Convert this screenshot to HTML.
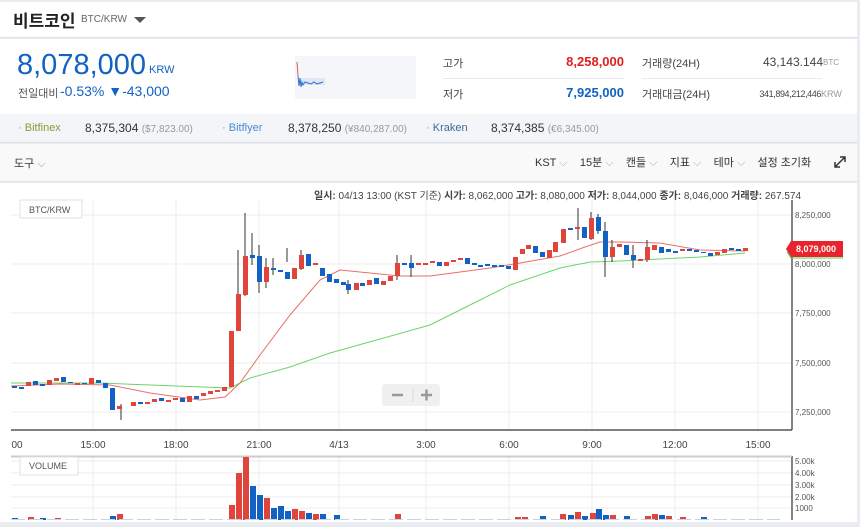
<!DOCTYPE html>
<html><head><meta charset="utf-8"><style>
*{margin:0;padding:0;box-sizing:border-box}
body{width:860px;height:527px;overflow:hidden;background:#e9ecf1;font-family:"Liberation Sans","Noto Sans CJK KR",sans-serif;position:relative;color:#333}
.a{position:absolute;white-space:nowrap}
.k{font-family:"Liberation Sans","Noto Sans CJK KR",sans-serif}
</style></head><body>
<div class="a" style="left:0;top:2px;width:857px;height:36px;background:#fff;border-bottom:1px solid #dde1ea"></div>
<div class="a k" style="left:13px;top:7px;font-size:17px;font-weight:bold;color:#222">비트코인</div>
<div class="a" style="left:81px;top:14px;font-size:10px;color:#666">BTC/KRW</div>
<div class="a" style="left:134px;top:17px;width:0;height:0;border-left:6px solid transparent;border-right:6px solid transparent;border-top:6px solid #555"></div>
<div class="a" style="left:0;top:39px;width:857px;height:75px;background:#fff"></div>
<div class="a" style="left:17px;top:49px;font-size:29px;color:#1261c4">8,078,000</div>
<div class="a" style="left:149px;top:64px;font-size:11px;color:#1261c4">KRW</div>
<div class="a k" style="left:18px;top:85px;font-size:11px;color:#555">전일대비</div>
<div class="a" style="left:60px;top:83px;font-size:14px;color:#1261c4">-0.53% ▼-43,000</div>
<div class="a" style="left:295px;top:56px;width:121px;height:43px;background:#f4f6fa"></div>
<svg class="a" style="left:295px;top:56px" width="121" height="43"><rect x="3" y="22" width="27" height="7" fill="#dfe7f3"/><path d="M2 6 L3 20" stroke="#e55" fill="none"/><path d="M3 20 L4 30 L5 22 L6 31 L7 26 L8 29 L10 26 L13 27 L16 28 L19 26 L22 28 L25 27 L28 26" stroke="#2b6fd1" fill="none"/></svg>
<div class="a k" style="left:443px;top:55px;font-size:11px;color:#444">고가</div>
<div class="a" style="left:540px;top:54px;width:84px;text-align:right;font-size:13px;font-weight:bold;color:#e02020">8,258,000</div>
<div class="a" style="left:443px;top:78px;width:181px;height:1px;background:#e8eaef"></div>
<div class="a k" style="left:443px;top:86px;font-size:11px;color:#444">저가</div>
<div class="a" style="left:540px;top:85px;width:84px;text-align:right;font-size:13px;font-weight:bold;color:#1261c4">7,925,000</div>
<div class="a k" style="left:642px;top:55px;font-size:11px;color:#444">거래량(24H)</div>
<div class="a" style="left:700px;top:55px;width:123px;text-align:right;font-size:12px;color:#444">43,143.144</div>
<div class="a" style="left:823px;top:58px;font-size:8px;color:#999">BTC</div>
<div class="a" style="left:642px;top:78px;width:180px;height:1px;background:#e8eaef"></div>
<div class="a k" style="left:642px;top:86px;font-size:11px;color:#444">거래대금(24H)</div>
<div class="a" style="left:700px;top:89px;width:121px;text-align:right;font-size:9px;color:#444;letter-spacing:-0.4px">341,894,212,446</div>
<div class="a" style="left:821px;top:89px;font-size:9px;color:#999">KRW</div>
<div class="a" style="left:0;top:114px;width:857px;height:29px;background:#f3f5f8;border-bottom:1px solid #dde1e6"></div>
<div class="a" style="left:18px;top:122px;font-size:11px;color:#8a9a3a"><span style="color:#999">· </span>Bitfinex</div>
<div class="a" style="left:85px;top:121px;font-size:12px;color:#333">8,375,304 <span style="font-size:10px;color:#999">($7,823.00)</span></div>
<div class="a" style="left:222px;top:122px;font-size:11px;color:#4a8ad4"><span style="color:#999">· </span>Bitflyer</div>
<div class="a" style="left:288px;top:121px;font-size:12px;color:#333">8,378,250 <span style="font-size:10px;color:#999">(¥840,287.00)</span></div>
<div class="a" style="left:426px;top:122px;font-size:11px;color:#3a6d9a"><span style="color:#999">· </span>Kraken</div>
<div class="a" style="left:491px;top:121px;font-size:12px;color:#333">8,374,385 <span style="font-size:10px;color:#999">(€6,345.00)</span></div>
<div class="a" style="left:0;top:144px;width:857px;height:38px;background:#f9f9f9;border-bottom:1px solid #e4e4e4"></div>
<div class="a k" style="left:14px;top:155px;font-size:11px;color:#333">도구 <span style="color:#999">⌵</span></div>
<div class="a k" style="left:535px;top:154px;font-size:11px;color:#333;word-spacing:0">KST <span style="color:#aaa">⌵</span>&nbsp;&nbsp;&nbsp;&nbsp;15분 <span style="color:#aaa">⌵</span>&nbsp;&nbsp;&nbsp;&nbsp;캔들 <span style="color:#aaa">⌵</span>&nbsp;&nbsp;&nbsp;&nbsp;지표 <span style="color:#aaa">⌵</span>&nbsp;&nbsp;&nbsp;&nbsp;테마 <span style="color:#aaa">⌵</span>&nbsp;&nbsp;&nbsp;&nbsp;설정 초기화</div>
<svg class="a" style="left:834px;top:156px" width="12" height="12"><path d="M1 11 L11 1 M6 1 H11 V6 M1 6 V11 H6" stroke="#333" stroke-width="1.5" fill="none"/></svg>
<div class="a" style="left:0;top:183px;width:857px;height:339px;background:#fff"></div>
<div class="a k" style="left:314px;top:187px;font-size:10px;color:#444"><b>일시:</b> 04/13 13:00 (KST 기준) <b>시가:</b> 8,062,000 <b>고가:</b> 8,080,000 <b>저가:</b> 8,044,000 <b>종가:</b> 8,046,000 <b>거래량:</b> 267.574</div>
<svg class="a" style="left:0;top:0" width="860" height="527" font-family="Liberation Sans,sans-serif">
<g stroke="#ececec" stroke-width="1">
<path d="M11 215H792M11 264H792M11 313H792M11 363H792M11 412H792"/>
<path d="M93 200V430M176 200V430M259 200V430M339 200V430M426 200V430M509 200V430M592 200V430M675 200V430M758 200V430"/>
<path d="M11 461H792M11 473H792M11 485H792M11 497H792M11 508H792"/>
<path d="M93 456V520M176 456V520M259 456V520M339 456V520M426 456V520M509 456V520M592 456V520M675 456V520M758 456V520"/>
</g>
<path d="M11 430H792M792 200V430M11 456.5H792M792 456V520" stroke="#333" stroke-width="1.2" fill="none"/>
<path d="M11 456.5H792" stroke="#ccc"/>
<g font-size="8" fill="#555">
<text x="795" y="218">8,250,000</text><text x="795" y="267">8,000,000</text><text x="795" y="316">7,750,000</text><text x="795" y="366">7,500,000</text><text x="795" y="415">7,250,000</text>
<text x="795" y="464">5.00k</text><text x="795" y="476">4.00k</text><text x="795" y="488">3.00k</text><text x="795" y="500">2.00k</text><text x="795" y="511">1000</text>
</g>
<g font-size="10" fill="#444" text-anchor="middle">
<text x="17" y="448">00</text><text x="93" y="448">15:00</text><text x="176" y="448">18:00</text><text x="259" y="448">21:00</text><text x="339" y="448">4/13</text><text x="426" y="448">3:00</text><text x="509" y="448">6:00</text><text x="592" y="448">9:00</text><text x="675" y="448">12:00</text><text x="758" y="448">15:00</text>
</g>
<rect x="20" y="200" width="62" height="18" fill="#fff" stroke="#e0e0e0"/><text x="29" y="213" font-size="9" fill="#555">BTC/KRW</text>
<rect x="20" y="457" width="58" height="18" fill="#fff" stroke="#e0e0e0"/><text x="29" y="469" font-size="9" fill="#555">VOLUME</text>
<polyline fill="none" stroke="#6dd36d" stroke-width="1" points="11,383 100,383 150,385 230,388 250,378 290,367 330,353 380,339 430,325 470,305 510,285 560,268 590,262 620,261 700,257 745,253"/>
<polyline fill="none" stroke="#e8706a" stroke-width="1" points="11,386 60,384 110,385 150,393 200,400 225,397 240,383 260,355 290,315 320,280 340,270 370,273 400,276 430,276 460,272 490,268 520,263 560,256 585,247 600,242 620,242 660,243 700,250 745,251"/>
<g stroke="#333" stroke-width="1">
<path d="M121 404V420M238 250V330M245 213V296M252 233V265M259 245V293M266 258V288M273 258V275M287 248V262M301 250V270M348 280V294M397 255V280M411 255V277M578 208V240M591 212V240M598 214V234M605 222V277M612 240V262M633 245V268M647 240V262"/>
</g>
<g fill="#e0453c">
<rect x="26" y="382" width="5" height="4"/><rect x="47" y="380" width="5" height="5"/><rect x="54" y="378" width="5" height="3"/><rect x="75" y="383" width="5" height="2"/><rect x="89" y="378" width="5" height="6"/>
<rect x="117" y="406" width="5" height="3"/><rect x="131" y="402" width="5" height="4"/><rect x="145" y="402" width="5" height="2"/><rect x="152" y="399" width="5" height="3"/><rect x="166" y="400" width="5" height="2"/><rect x="173" y="398" width="5" height="2"/><rect x="187" y="396" width="5" height="6"/><rect x="201" y="393" width="5" height="3"/><rect x="208" y="391" width="5" height="3"/><rect x="215" y="390" width="5" height="2"/><rect x="222" y="387" width="5" height="4"/>
<rect x="229" y="331" width="5" height="56"/><rect x="236" y="294" width="5" height="37"/><rect x="243" y="256" width="5" height="39"/><rect x="264" y="267" width="5" height="15"/><rect x="292" y="268" width="5" height="11"/><rect x="299" y="255" width="5" height="14"/><rect x="313" y="263" width="5" height="2"/><rect x="354" y="283" width="5" height="7"/><rect x="367" y="280" width="5" height="5"/><rect x="381" y="281" width="5" height="4"/><rect x="388" y="276" width="5" height="5"/><rect x="395" y="263" width="5" height="13"/><rect x="416" y="263" width="5" height="2"/><rect x="423" y="263" width="5" height="2"/><rect x="430" y="261" width="5" height="2"/><rect x="444" y="262" width="5" height="4"/><rect x="451" y="260" width="5" height="2"/><rect x="458" y="258" width="5" height="2"/>
<rect x="513" y="257" width="5" height="13"/><rect x="520" y="249" width="5" height="5"/><rect x="526" y="245" width="5" height="4"/><rect x="547" y="250" width="5" height="8"/><rect x="553" y="242" width="5" height="10"/><rect x="561" y="229" width="5" height="14"/><rect x="575" y="227" width="5" height="2"/><rect x="589" y="218" width="5" height="21"/><rect x="610" y="247" width="5" height="10"/><rect x="617" y="244" width="5" height="3"/><rect x="638" y="259" width="5" height="2"/><rect x="645" y="247" width="5" height="13"/><rect x="652" y="245" width="5" height="5"/><rect x="680" y="249" width="5" height="2"/><rect x="715" y="252" width="5" height="3"/><rect x="722" y="249" width="5" height="4"/><rect x="743" y="248" width="5" height="3"/>
</g>
<g fill="#1261c4">
<rect x="12" y="386" width="5" height="2"/><rect x="19" y="387" width="5" height="2"/><rect x="33" y="381" width="5" height="4"/><rect x="40" y="384" width="5" height="2"/><rect x="61" y="377" width="5" height="5"/><rect x="68" y="382" width="5" height="1"/><rect x="82" y="383" width="5" height="1"/><rect x="96" y="380" width="5" height="3"/><rect x="103" y="383" width="5" height="5"/><rect x="110" y="388" width="5" height="22"/>
<rect x="138" y="402" width="5" height="2"/><rect x="159" y="398" width="5" height="3"/><rect x="180" y="398" width="5" height="4"/><rect x="194" y="396" width="5" height="3"/>
<rect x="250" y="255" width="5" height="3"/><rect x="257" y="256" width="5" height="26"/><rect x="271" y="268" width="5" height="2"/><rect x="278" y="270" width="5" height="2"/><rect x="285" y="272" width="5" height="7"/><rect x="306" y="254" width="5" height="12"/><rect x="320" y="268" width="5" height="8"/><rect x="327" y="274" width="5" height="8"/><rect x="334" y="279" width="5" height="4"/><rect x="341" y="282" width="5" height="3"/><rect x="346" y="284" width="5" height="6"/><rect x="360" y="283" width="5" height="3"/><rect x="374" y="278" width="5" height="6"/><rect x="402" y="263" width="5" height="2"/><rect x="409" y="263" width="5" height="5"/><rect x="437" y="262" width="5" height="4"/>
<rect x="465" y="258" width="5" height="6"/><rect x="472" y="263" width="5" height="2"/><rect x="478" y="265" width="5" height="2"/><rect x="485" y="264" width="5" height="2"/><rect x="492" y="265" width="5" height="2"/><rect x="499" y="265" width="5" height="2"/><rect x="506" y="266" width="5" height="3"/><rect x="533" y="246" width="5" height="7"/><rect x="540" y="252" width="5" height="5"/><rect x="568" y="228" width="5" height="2"/><rect x="582" y="227" width="5" height="11"/><rect x="596" y="217" width="5" height="14"/><rect x="603" y="231" width="5" height="26"/><rect x="624" y="245" width="5" height="10"/><rect x="631" y="255" width="5" height="5"/><rect x="659" y="247" width="5" height="6"/><rect x="666" y="249" width="5" height="3"/><rect x="673" y="251" width="5" height="2"/><rect x="687" y="249" width="5" height="2"/><rect x="694" y="250" width="5" height="2"/><rect x="701" y="252" width="5" height="1"/><rect x="708" y="253" width="5" height="3"/><rect x="729" y="248" width="5" height="2"/><rect x="736" y="249" width="5" height="2"/>
</g>
<g fill="#e0453c">
<rect x="28" y="517" width="6" height="3"/><rect x="55" y="518" width="6" height="2"/><rect x="117" y="514" width="6" height="6"/><rect x="229" y="505" width="6" height="15"/><rect x="236" y="473" width="6" height="47"/><rect x="243" y="457" width="6" height="63"/><rect x="264" y="498" width="6" height="22"/><rect x="292" y="509" width="6" height="11"/><rect x="299" y="511" width="6" height="9"/><rect x="313" y="514" width="6" height="6"/><rect x="395" y="514" width="6" height="6"/>
<rect x="515" y="517" width="6" height="3"/><rect x="522" y="517" width="6" height="3"/><rect x="560" y="514" width="6" height="6"/><rect x="575" y="512" width="6" height="8"/><rect x="590" y="513" width="6" height="7"/><rect x="610" y="515" width="6" height="5"/><rect x="645" y="516" width="6" height="4"/><rect x="652" y="514" width="6" height="6"/><rect x="666" y="516" width="6" height="4"/><rect x="680" y="517" width="6" height="3"/>
</g>
<g fill="#1261c4">
<rect x="12" y="518" width="6" height="2"/><rect x="40" y="518" width="6" height="2"/><rect x="110" y="516" width="6" height="4"/><rect x="250" y="486" width="6" height="34"/><rect x="257" y="495" width="6" height="25"/><rect x="271" y="508" width="6" height="12"/><rect x="278" y="506" width="6" height="14"/><rect x="285" y="511" width="6" height="9"/><rect x="306" y="513" width="6" height="7"/><rect x="320" y="514" width="6" height="6"/><rect x="334" y="515" width="6" height="5"/>
<rect x="540" y="516" width="6" height="4"/><rect x="568" y="515" width="6" height="5"/><rect x="582" y="516" width="6" height="4"/><rect x="596" y="509" width="6" height="11"/><rect x="603" y="515" width="6" height="5"/><rect x="624" y="516" width="6" height="4"/><rect x="659" y="515" width="6" height="5"/><rect x="701" y="517" width="6" height="3"/>
</g>
<path d="M11 519.5H780" stroke="#c8d2e4" stroke-dasharray="14 4"/>
<path d="M786 249 L791 241 H843 V257 H791 Z" fill="#e8232b"/><path d="M787 252 L791 258 H843" stroke="#5c5" fill="none"/>
<text x="796" y="252" font-size="9" font-weight="bold" fill="#fff">8,079,000</text>
<rect x="382" y="384" width="58" height="22" rx="3" fill="#f0f0f0"/>
<path d="M392 395H403M421 395H432M426.5 389.5V400.5" stroke="#999" stroke-width="2.5"/><path d="M413 388V402" stroke="#ddd"/>
</svg>
</body></html>
